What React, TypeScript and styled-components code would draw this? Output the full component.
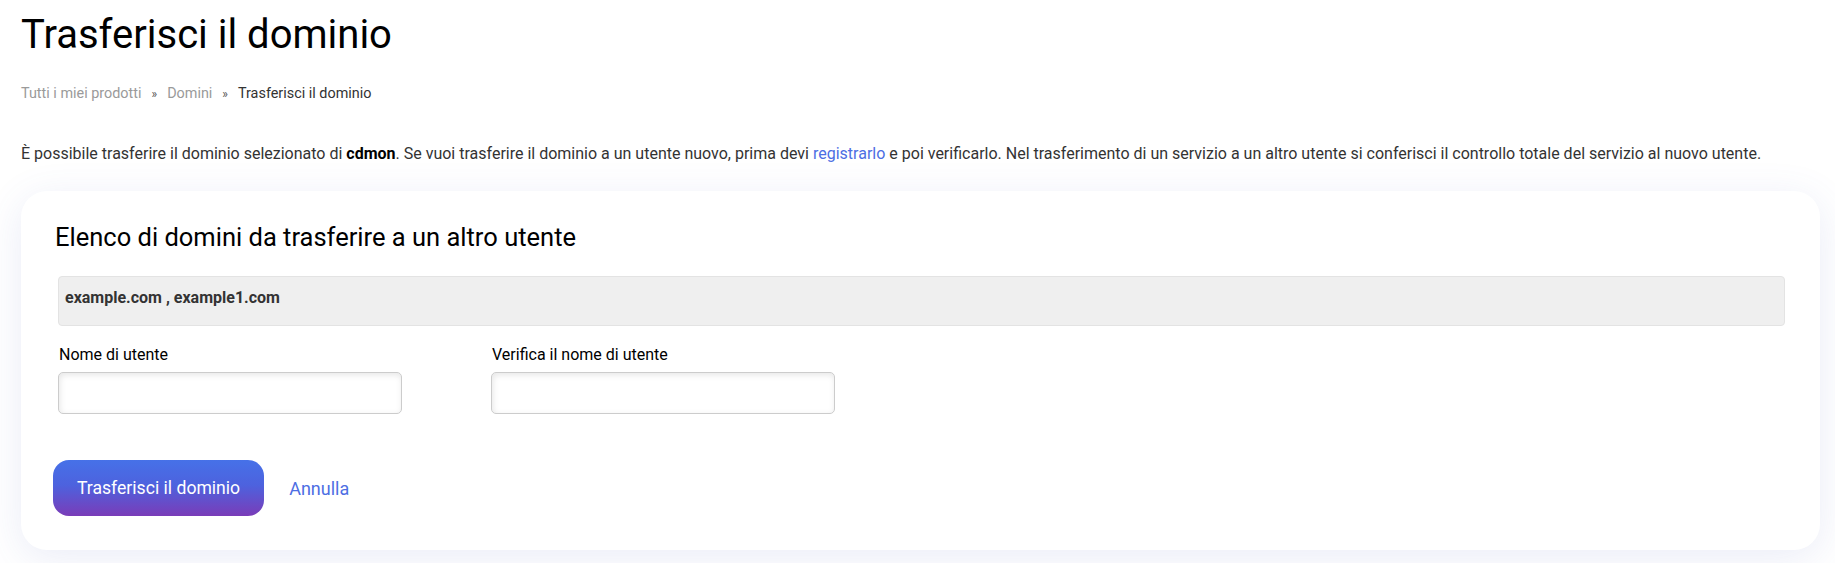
import React from "react";
import styled, { createGlobalStyle } from "styled-components";

const Global = createGlobalStyle`
  html, body { margin: 0; padding: 0; background: #ffffff; }
  body { font-family: Roboto, "Liberation Sans", Arial, sans-serif; color: #333333; }
  * { box-sizing: border-box; }
`;

const Page = styled.div`
  padding: 11px 15px 40px 21px;
`;

const Title = styled.h1`
  margin: 0;
  font-size: 40px;
  line-height: 48px;
  font-weight: 400;
  color: #000000;
`;

const Crumbs = styled.nav`
  display: flex;
  align-items: center;
  margin-top: 25px;
  font-size: 14.4px;
  line-height: 20px;
`;

const Crumb = styled.a<{ $active?: boolean }>`
  color: ${(p) => (p.$active ? "#333333" : "#9a9a9a")};
  text-decoration: none;
`;

const Sep = styled.span`
  color: #555555;
  padding: 0 10px;
  font-size: 12px;
`;

const Intro = styled.p`
  margin: 39px 0 0;
  font-size: 16px;
  line-height: 22px;
  color: #333333;
  b { color: #000; font-weight: 700; }
`;

const Link = styled.a`
  color: #4d6ee3;
  text-decoration: none;
`;

const Card = styled.section`
  margin-top: 26px;
  background: #ffffff;
  border-radius: 26px;
  box-shadow: 0 8px 40px rgba(80, 100, 190, 0.12);
  padding: 31px 35px 34px 32px;
`;

const CardTitle = styled.h2`
  margin: 0 0 0 2px;
  font-size: 25.5px;
  line-height: 30px;
  font-weight: 400;
  color: #000000;
`;

const DomainBox = styled.div`
  margin: 24px 0 0 5px;
  height: 50px;
  background: #efefef;
  border: 1px solid #e3e3e3;
  border-radius: 4px;
  padding: 11px 6px;
  font-size: 16px;
  line-height: 20px;
  font-weight: 700;
  color: #333333;
`;

const FieldsRow = styled.div`
  display: grid;
  grid-template-columns: 433px 433px;
  margin: 19px 0 0 5px;
`;

const Field = styled.div`
  display: flex;
  flex-direction: column;
`;

const Label = styled.label`
  font-size: 16px;
  line-height: 20px;
  color: #000000;
  margin: 0 0 7px 1px;
`;

const Input = styled.input`
  width: 344px;
  height: 42px;
  border: 1px solid #cccccc;
  border-radius: 5px;
  background: #ffffff;
  box-shadow: inset 1px 2px 6px rgba(0, 0, 0, 0.1);
  outline: none;
  font-family: inherit;
  font-size: 16px;
  padding: 0 10px;
`;

const Actions = styled.div`
  display: flex;
  align-items: center;
  gap: 25px;
  margin-top: 46px;
`;

const PrimaryButton = styled.button`
  height: 56px;
  padding: 0 24px;
  border: none;
  border-radius: 16px;
  background: linear-gradient(180deg, #4671e8 0%, #4d62de 45%, #7a3cb8 100%);
  color: #ffffff;
  font-family: inherit;
  font-size: 17.6px;
  cursor: pointer;
`;

const CancelLink = styled.a`
  color: #4d6ee3;
  font-size: 18px;
  text-decoration: none;
`;

export default function App() {
  return (
    <>
      <Global />
      <Page>
        <Title>Trasferisci il dominio</Title>
        <Crumbs>
          <Crumb href="#">Tutti i miei prodotti</Crumb>
          <Sep>»</Sep>
          <Crumb href="#">Domini</Crumb>
          <Sep>»</Sep>
          <Crumb $active>Trasferisci il dominio</Crumb>
        </Crumbs>
        <Intro>
          È possibile trasferire il dominio selezionato di <b>cdmon</b>. Se vuoi trasferire il dominio a un
          utente nuovo, prima devi <Link href="#">registrarlo</Link> e poi verificarlo. Nel trasferimento di un
          servizio a un altro utente si conferisci il controllo totale del servizio al nuovo utente.
        </Intro>
        <Card>
          <CardTitle>Elenco di domini da trasferire a un altro utente</CardTitle>
          <DomainBox>example.com , example1.com</DomainBox>
          <FieldsRow>
            <Field>
              <Label>Nome di utente</Label>
              <Input type="text" />
            </Field>
            <Field>
              <Label>Verifica il nome di utente</Label>
              <Input type="text" />
            </Field>
          </FieldsRow>
          <Actions>
            <PrimaryButton>Trasferisci il dominio</PrimaryButton>
            <CancelLink href="#">Annulla</CancelLink>
          </Actions>
        </Card>
      </Page>
    </>
  );
}
